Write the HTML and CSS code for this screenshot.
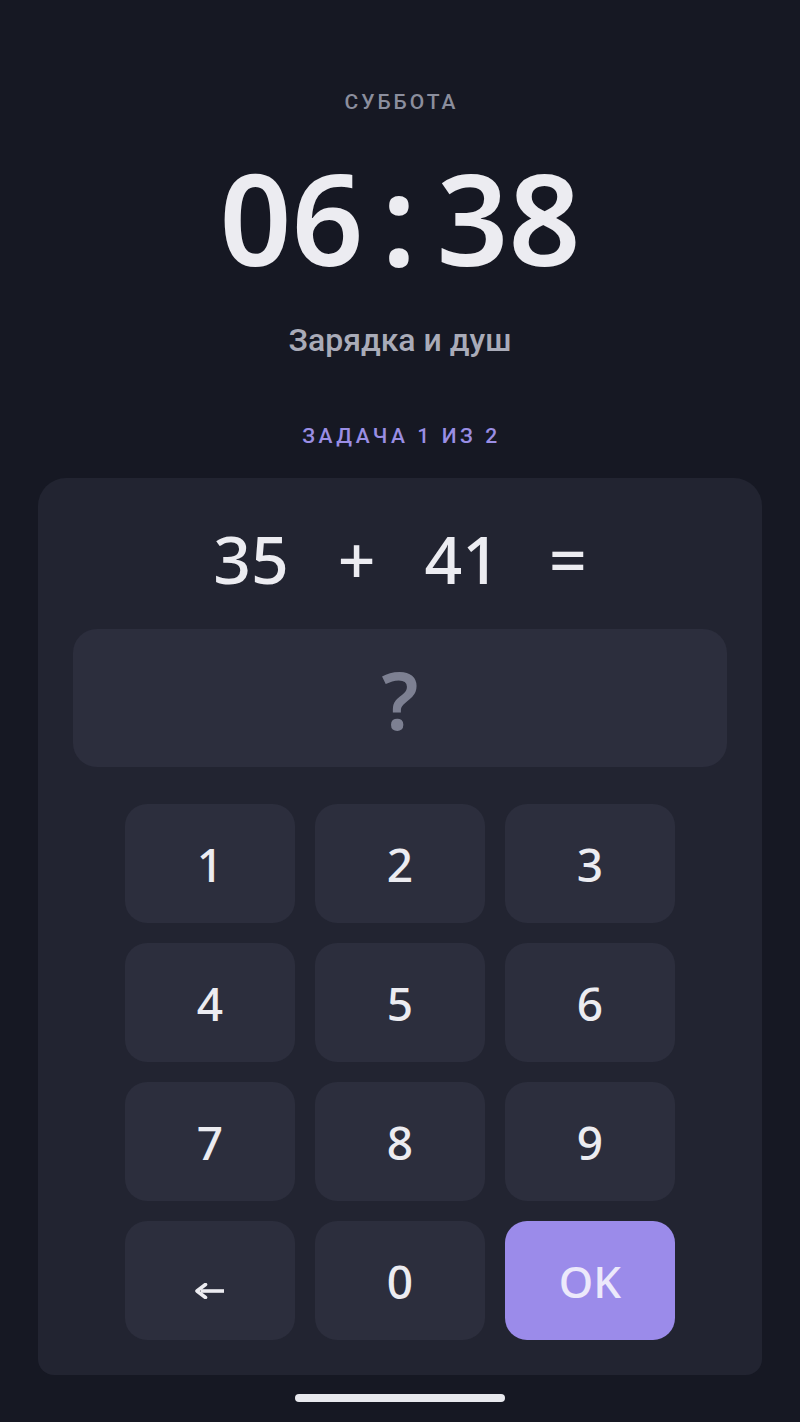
FILE: index.html
```html
<!DOCTYPE html>
<html lang="ru">
<head>
    <meta charset="UTF-8">
    <title>Будильник</title>
    <link rel="stylesheet" href="styles.css">
</head>
<body>
<div class="screen">
    <div class="day">СУББОТА</div>
    <div class="time">06<span class="colon">:</span>38</div>
    <div class="label">Зарядка и душ</div>
    <div class="task">ЗАДАЧА 1 ИЗ 2</div>

    <div class="card">
        <div class="equation">
            <span>35</span>
            <span>+</span>
            <span>41</span>
            <span>=</span>
        </div>
        <div class="answer">?</div>
        <div class="keypad">
            <div class="key">1</div>
            <div class="key">2</div>
            <div class="key">3</div>
            <div class="key">4</div>
            <div class="key">5</div>
            <div class="key">6</div>
            <div class="key">7</div>
            <div class="key">8</div>
            <div class="key">9</div>
            <div class="key key-back">
                <svg width="30" height="16" viewBox="0 0 30 16">
                    <path d="M29 8H6" stroke="#ececf1" stroke-width="3.6" fill="none"/>
                    <path d="M10.5 1.5L2 8L10.5 14.5" stroke="#ececf1" stroke-width="3.6" fill="none" stroke-linejoin="round" stroke-linecap="round"/>
                </svg>
            </div>
            <div class="key">0</div>
            <div class="key key-ok">OK</div>
        </div>
    </div>

    <div class="bottom">
        <div class="home-bar"></div>
    </div>
</div>
</body>
</html>
```

FILE: styles.css
```css
*{
    margin: 0;
    padding: 0;
    box-sizing: border-box;
}
body{
    background: #161823;
    font-family: "Noto Sans", "Open Sans", sans-serif;
    color: #ececf1;
}
.screen{
    width: 800px;
    height: 1422px;
    display: flex;
    flex-direction: column;
    align-items: center;
    overflow: hidden;
}
.day{
    margin-top: 88px;
    font-family: Roboto, "Noto Sans", sans-serif;
    font-size: 21px;
    line-height: 28px;
    letter-spacing: 3px;
    font-weight: 500;
    color: #8b8e9d;
    padding-left: 3px;
}
.time{
    margin-top: 36px;
    font-size: 126px;
    line-height: 130px;
    font-weight: 600;
    color: #ececf1;
}
.time .colon{
    margin: 0 20px 0 18px;
}
.label{
    margin-top: 38px;
    font-family: Roboto, "Noto Sans", sans-serif;
    font-size: 32px;
    line-height: 40px;
    font-weight: 500;
    color: #a9abb8;
}
.task{
    margin-top: 62px;
    font-family: Roboto, "Noto Sans", sans-serif;
    font-size: 21px;
    line-height: 28px;
    letter-spacing: 3.6px;
    font-weight: 500;
    color: #9a8ee4;
    padding-left: 3px;
}
.card{
    margin-top: 28px;
    width: 724px;
    flex: 1;
    background: #222431;
    border-radius: 28px 28px 16px 16px;
    padding: 0 35px;
    display: flex;
    flex-direction: column;
    align-items: center;
}
.equation{
    margin-top: 38px;
    display: flex;
    gap: 49px;
    font-size: 66px;
    line-height: 84px;
    font-weight: 500;
    color: #ececf1;
}
.answer{
    margin-top: 29px;
    width: 100%;
    height: 138px;
    border-radius: 24px;
    background: #2c2e3d;
    display: flex;
    align-items: center;
    justify-content: center;
    font-size: 80px;
    font-weight: 600;
    color: #7d8092;
}
.keypad{
    margin-top: 37px;
    display: grid;
    grid-template-columns: repeat(3, 170px);
    grid-auto-rows: 119px;
    gap: 20px;
}
.key{
    background: #2c2e3d;
    border-radius: 22px;
    display: flex;
    align-items: center;
    justify-content: center;
    font-size: 46px;
    font-weight: 500;
    color: #ececf1;
}
.key-back{
    padding-top: 20px;
}
.key-ok{
    background: #9b8bea;
    color: #ece9fb;
    font-size: 44px;
}
.bottom{
    width: 100%;
    height: 47px;
    flex-shrink: 0;
    display: flex;
    justify-content: center;
    padding-top: 19px;
}
.home-bar{
    width: 210px;
    height: 8px;
    border-radius: 4px;
    background: #e8e9ee;
}
```
